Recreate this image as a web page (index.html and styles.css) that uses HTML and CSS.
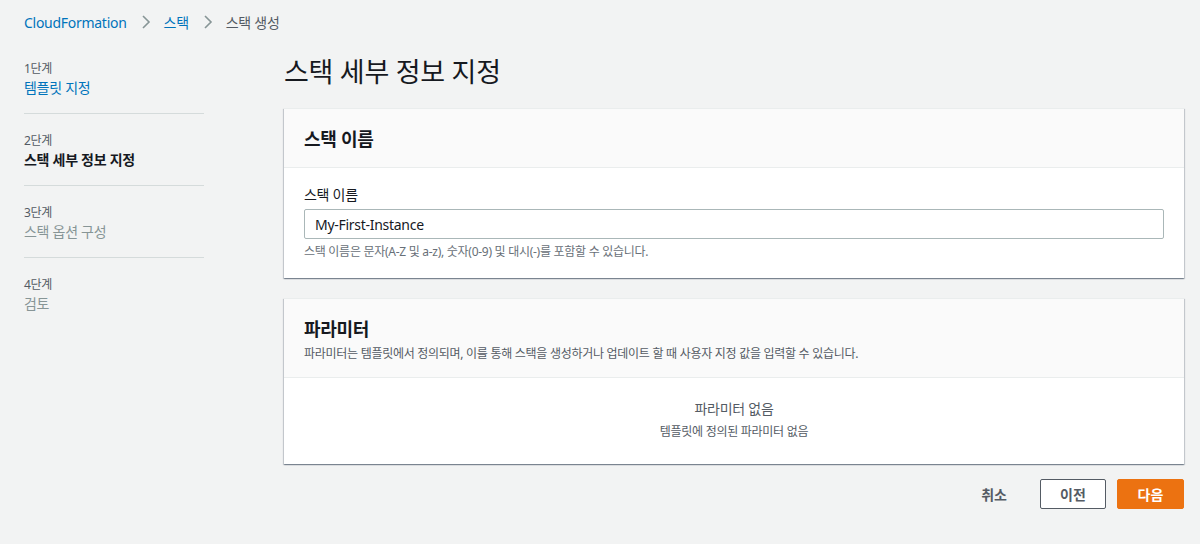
FILE: index.html
```html
<!DOCTYPE html>
<html lang="ko">
<head>
    <meta charset="UTF-8">
    <title>스택 생성 - CloudFormation</title>
    <link rel="stylesheet" href="styles.css">
</head>
<body>
    <nav class="breadcrumb">
        <a href="#">CloudFormation</a>
        <svg class="chev" width="10" height="14" viewBox="0 0 10 14"><path d="M2 1 L8 7 L2 13" fill="none" stroke="#879596" stroke-width="1.6"/></svg>
        <a href="#">스택</a>
        <svg class="chev" width="10" height="14" viewBox="0 0 10 14"><path d="M2 1 L8 7 L2 13" fill="none" stroke="#879596" stroke-width="1.6"/></svg>
        <span class="current">스택 생성</span>
    </nav>

    <div class="layout">
        <aside class="steps">
            <div class="step">
                <div class="step-num">1단계</div>
                <a class="step-name done" href="#">템플릿 지정</a>
            </div>
            <div class="step">
                <div class="step-num">2단계</div>
                <div class="step-name active">스택 세부 정보 지정</div>
            </div>
            <div class="step">
                <div class="step-num">3단계</div>
                <div class="step-name">스택 옵션 구성</div>
            </div>
            <div class="step last">
                <div class="step-num">4단계</div>
                <div class="step-name">검토</div>
            </div>
        </aside>

        <main class="content">
            <h1>스택 세부 정보 지정</h1>

            <section class="card">
                <div class="card-header">
                    <h2>스택 이름</h2>
                </div>
                <div class="card-body">
                    <label class="field-label">스택 이름</label>
                    <input class="text-input" type="text" value="My-First-Instance">
                    <p class="hint">스택 이름은 문자(A-Z 및 a-z), 숫자(0-9) 및 대시(-)를 포함할 수 있습니다.</p>
                </div>
            </section>

            <section class="card">
                <div class="card-header tall">
                    <h2>파라미터</h2>
                    <p class="desc">파라미터는 템플릿에서 정의되며, 이를 통해 스택을 생성하거나 업데이트 할 때 사용자 지정 값을 입력할 수 있습니다.</p>
                </div>
                <div class="card-body empty">
                    <div class="empty-title">파라미터 없음</div>
                    <div class="empty-sub">템플릿에 정의된 파라미터 없음</div>
                </div>
            </section>

            <div class="actions">
                <button class="btn-link">취소</button>
                <button class="btn">이전</button>
                <button class="btn primary">다음</button>
            </div>
        </main>
    </div>
</body>
</html>
```

FILE: styles.css
```css
* {
    box-sizing: border-box;
}

body {
    margin: 0;
    background: #f2f3f3;
    font-family: "Noto Sans", "Noto Sans CJK KR", sans-serif;
    color: #16191f;
    font-size: 14px;
    letter-spacing: -0.02em;
}

a {
    text-decoration: none;
}

/* Breadcrumb */
.breadcrumb {
    display: flex;
    align-items: center;
    height: 44px;
    padding: 0 24px;
    font-size: 14px;
}

.breadcrumb a {
    color: #0073bb;
}

.breadcrumb .chev {
    margin: 0 13px 0 14px;
}

.breadcrumb .current {
    color: #545b64;
}

/* Layout */
.layout {
    display: flex;
    padding: 0 16px 0 24px;
    gap: 80px;
}

.steps {
    width: 180px;
    flex-shrink: 0;
    margin-top: -2px;
}

.step {
    border-bottom: 1px solid #d5dbdb;
    padding: 18px 0 15px;
}

.step.last {
    border-bottom: none;
}

.step-num {
    font-size: 12px;
    color: #545b64;
    line-height: 18px;
}

.step-name {
    display: block;
    font-size: 14px;
    line-height: 20px;
    color: #879596;
}

.step-name.done {
    color: #0073bb;
}

.step-name.active {
    color: #16191f;
    font-weight: bold;
}

.content {
    flex: 1;
}

h1 {
    font-size: 27px;
    font-weight: normal;
    margin: 10px 0 18px;
    line-height: 36px;
}

/* Cards */
.card {
    background: #fff;
    border-top: 1px solid #eaeded;
    box-shadow: 0 1px 1px 0 rgba(0, 22, 44, 0.3), 1px 1px 1px 0 rgba(0, 22, 44, 0.15), -1px 1px 1px 0 rgba(0, 22, 44, 0.15);
    margin-bottom: 20px;
}

.card-header {
    background: #fafafa;
    border-bottom: 1px solid #eaeded;
    height: 59px;
    padding: 18px 20px 0;
}

.card-header.tall {
    height: 79px;
}

.card-header h2 {
    margin: 0;
    font-size: 18px;
    font-weight: bold;
    line-height: 24px;
}

.card-header .desc {
    margin: 4px 0 0;
    font-size: 12px;
    color: #545b64;
    line-height: 18px;
}

.card-body {
    padding: 16px 20px 17px;
}

.field-label {
    display: block;
    font-size: 14px;
    line-height: 22px;
    margin-bottom: 3px;
}

.text-input {
    display: block;
    width: 100%;
    height: 30px;
    border: 1px solid #aab7b8;
    border-radius: 2px;
    padding: 0 10px;
    font-family: inherit;
    font-size: 14px;
    letter-spacing: -0.02em;
    color: #16191f;
}

.hint {
    margin: 4px 0 0;
    font-size: 12px;
    color: #687078;
    line-height: 18px;
}

.card-body.empty {
    text-align: center;
    padding: 20px 20px 20px;
    height: 86px;
}

.empty-title {
    font-size: 14px;
    line-height: 22px;
    color: #545b64;
}

.empty-sub {
    font-size: 12px;
    line-height: 20px;
    color: #545b64;
    margin-top: 2px;
}

/* Actions */
.actions {
    display: flex;
    justify-content: flex-end;
    align-items: center;
    gap: 11px;
    margin-top: -5px;
}

.btn-link {
    background: none;
    border: none;
    font-family: inherit;
    font-size: 14px;
    font-weight: bold;
    color: #545b64;
    padding: 0 20px;
    margin-right: 2px;
    height: 30px;
}

.btn {
    height: 30px;
    width: 66px;
    padding: 0;
    border: 1px solid #545b64;
    border-radius: 2px;
    background: #fff;
    font-family: inherit;
    font-size: 14px;
    font-weight: bold;
    color: #545b64;
}

.btn.primary {
    background: #ec7211;
    border-color: #ec7211;
    color: #fff;
    width: 67px;
}
```
